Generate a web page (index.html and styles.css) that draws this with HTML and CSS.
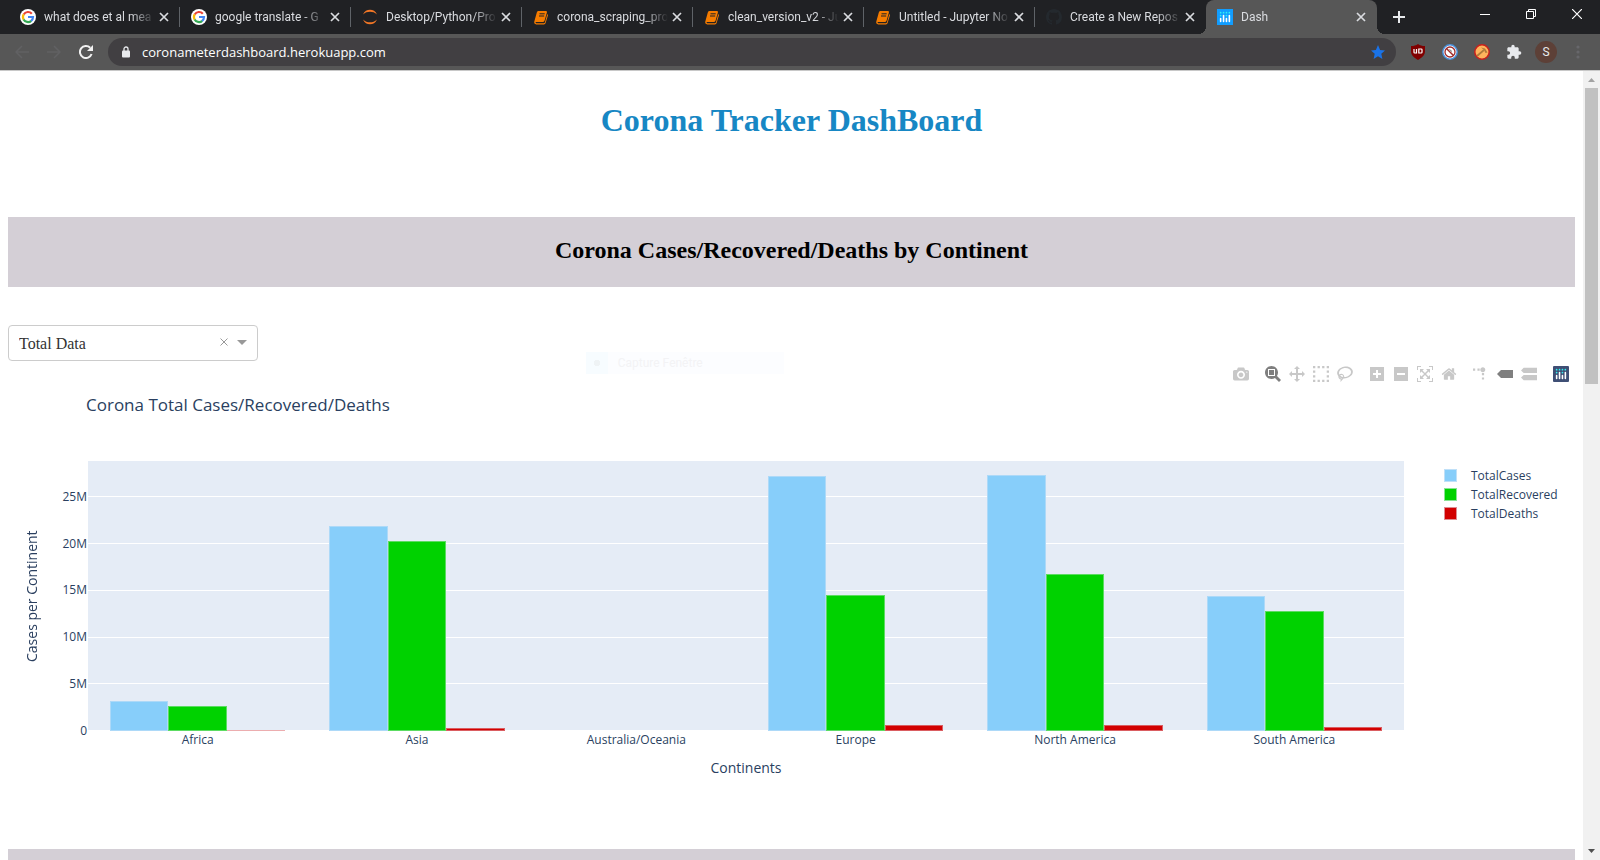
FILE: index.html
```html
<!DOCTYPE html>
<html lang="en">
<head>
<meta charset="utf-8">
<title>Dash</title>
<link rel="stylesheet" href="styles.css">
</head>
<body>
<svg class="sprite" aria-hidden="true">
  <symbol id="google" viewBox="0 0 16 16">
    <circle cx="8" cy="8" r="8" fill="#fff"/>
    <g fill="none" stroke-width="2.2">
      <path d="M11.8 4.7A5 5 0 0 0 3.7 5.5" stroke="#ea4335"/>
      <path d="M3.7 5.4A5 5 0 0 0 3.7 10.6" stroke="#fbbc05"/>
      <path d="M3.6 10.4A5 5 0 0 0 11.3 11.8" stroke="#34a853"/>
      <path d="M11.1 11.9A5 5 0 0 0 13 8H8" stroke="#4285f4"/>
    </g>
  </symbol>
  <symbol id="jupyter" viewBox="0 0 16 16">
    <path d="M1 5.5C2.5 2 5 .8 8 .8s5.500 1.200 7 4.700C13 3.300 10.500 2.700 8 2.700S3 3.300 1 5.500zM1 10.500c1.500 3.500 4 4.700 7 4.700s5.500-1.200 7-4.700c-2 2.200-4.500 2.800-7 2.800s-5-.6-7-2.800z" fill="#f37726"/>
  </symbol>
  <symbol id="book" viewBox="0 0 16 16">
    <path d="M5.500 2h7.200c1 0 1.500.7 1.200 1.600l-2.300 8c-.2.800-.8 1.400-1.700 1.400H3.200c-.9 0-.9 1.200.1 1.200h7.500c.5 0 .9-.3 1.100-.8L14.300 5c.6.300.8.900.6 1.500l-2.300 7.600c-.2.800-.9 1.300-1.700 1.300H3.300C1.700 15.400.8 14 1.300 12.600L3.800 3.500C4 2.600 4.600 2 5.500 2z" fill="#f57c00"/>
    <path d="M5 3h8l-2.500 9.500h-8z" fill="#f57c00"/>
    <path d="M6.500 4.800h5.200M6 7h5.200" stroke="#202124" fill="none"/>
  </symbol>
  <symbol id="github" viewBox="0 0 16 16">
    <path d="M8 0C3.580 0 0 3.580 0 8c0 3.540 2.290 6.530 5.470 7.590.4.070.55-.17.55-.38 0-.19-.01-.82-.01-1.490-2.010.37-2.530-.49-2.690-.94-.09-.23-.48-.94-.82-1.130-.28-.15-.68-.52-.01-.53.63-.01 1.080.58 1.230.82.72 1.210 1.870.87 2.330.66.07-.52.28-.87.51-1.070-1.780-.2-3.640-.89-3.640-3.950 0-.87.31-1.590.82-2.150-.08-.2-.36-1.020.08-2.120 0 0 .67-.21 2.200.82.64-.18 1.320-.27 2-.27s1.360.09 2 .27c1.530-1.040 2.200-.82 2.200-.82.44 1.100.16 1.920.08 2.120.51.56.82 1.270.82 2.150 0 3.070-1.870 3.750-3.650 3.950.29.25.54.73.54 1.480 0 1.070-.01 1.930-.01 2.200 0 .21.15.46.55.38A8.010 8.010 0 0 0 16 8c0-4.420-3.580-8-8-8z" fill="#24292e"/>
  </symbol>
  <symbol id="plotly-dots" viewBox="0 0 132 132">
    <g class="dots"><circle cx="78" cy="54" r="7"/><circle cx="30" cy="54" r="7"/><circle cx="30" cy="30" r="7"/><circle cx="54" cy="30" r="7"/><circle cx="78" cy="30" r="7"/><circle cx="102" cy="30" r="7"/></g>
    <path d="M30 78v25M54 54v49M78 78v25M102 54v49" stroke="#fff" stroke-width="13" stroke-linecap="round"/>
  </symbol>
  <symbol id="x" viewBox="0 0 10 10"><path d="M1 1l8 8M9 1L1 9" fill="none" stroke="currentColor" stroke-width="1.700"/></symbol>
</svg>

<header class="browser">
  <div class="tabstrip">
    <div class="tab"><svg class="favicon"><use href="#google"/></svg><span class="tab-title">what does et al mea</span><button class="tab-close" aria-label="Close tab"><svg><use href="#x"/></svg></button></div>
    <div class="tab"><svg class="favicon"><use href="#google"/></svg><span class="tab-title">google translate - G</span><button class="tab-close" aria-label="Close tab"><svg><use href="#x"/></svg></button></div>
    <div class="tab"><svg class="favicon"><use href="#jupyter"/></svg><span class="tab-title">Desktop/Python/Pro</span><button class="tab-close" aria-label="Close tab"><svg><use href="#x"/></svg></button></div>
    <div class="tab"><svg class="favicon"><use href="#book"/></svg><span class="tab-title">corona_scraping_pro</span><button class="tab-close" aria-label="Close tab"><svg><use href="#x"/></svg></button></div>
    <div class="tab"><svg class="favicon"><use href="#book"/></svg><span class="tab-title">clean_version_v2 - Ju</span><button class="tab-close" aria-label="Close tab"><svg><use href="#x"/></svg></button></div>
    <div class="tab"><svg class="favicon"><use href="#book"/></svg><span class="tab-title">Untitled - Jupyter No</span><button class="tab-close" aria-label="Close tab"><svg><use href="#x"/></svg></button></div>
    <div class="tab tab-last"><svg class="favicon"><use href="#github"/></svg><span class="tab-title">Create a New Repos</span><button class="tab-close" aria-label="Close tab"><svg><use href="#x"/></svg></button></div>
    <div class="tab tab-active"><svg class="favicon favicon-dash"><use href="#plotly-dots"/></svg><span class="tab-title">Dash</span><button class="tab-close" aria-label="Close tab"><svg><use href="#x"/></svg></button></div>
    <button class="new-tab" aria-label="New tab"><svg width="12" height="12" viewBox="0 0 12 12"><path d="M6 0v12M0 6h12" stroke="#e8eaed" stroke-width="2"/></svg></button>
    <div class="window-controls">
      <button aria-label="Minimize"><svg width="10" height="10" viewBox="0 0 10 10"><path d="M0 5.500h10" stroke="#fff"/></svg></button>
      <button aria-label="Restore"><svg width="10" height="10" viewBox="0 0 10 10"><path d="M.5 2.500h7v7h-7zM2.500 2.500v-2h7v7h-2" fill="none" stroke="#fff"/></svg></button>
      <button aria-label="Close"><svg width="10" height="10" viewBox="0 0 10 10"><path d="M0 0l10 10M10 0L0 10" stroke="#fff" stroke-width="1.200"/></svg></button>
    </div>
  </div>
  <div class="toolbar">
    <button class="nav" aria-label="Back"><svg width="14" height="14" viewBox="0 0 14 14"><path d="M14 7H1M7 1L1 7l6 6" fill="none" stroke="#616163" stroke-width="1.500"/></svg></button>
    <button class="nav" aria-label="Forward"><svg width="14" height="14" viewBox="0 0 14 14"><path d="M0 7h13M7 1l6 6-6 6" fill="none" stroke="#616163" stroke-width="1.500"/></svg></button>
    <button class="nav" aria-label="Reload"><svg width="14" height="14" viewBox="0 0 14 14"><path d="M12.600 9A6 6 0 1 1 11.200 2.800" fill="none" stroke="#f1f1f1" stroke-width="2"/><path d="M14 0v6H8z" fill="#f1f1f1"/></svg></button>
    <div class="address">
      <svg class="lock" width="8" height="12" viewBox="0 0 8 12"><path d="M2 5V3a2 2 0 0 1 4 0v2" fill="none" stroke="#e8eaed" stroke-width="1.300"/><rect y="4.500" width="8" height="7" rx="1" fill="#e8eaed"/></svg>
      <input class="url" type="text" aria-label="Address" value="coronameterdashboard.herokuapp.com">
      <button class="star" aria-label="Bookmark"><svg width="14" height="14" viewBox="0 0 14 14"><path d="M7 0l2.100 4.900 4.900.5-3.700 3.400L11.400 14 7 11.200 2.600 14l1.100-5.200L0 5.400l4.900-.5z" fill="#1a73e8"/></svg></button>
    </div>
    <div class="extensions">
      <button aria-label="uBlock"><svg width="16" height="16" viewBox="0 0 16 16"><path d="M8 0c2 1.400 4 2 7 2v5c0 4-2.500 6.500-7 9-4.500-2.500-7-5-7-9V2c3 0 5-.6 7-2z" fill="#800000"/><path d="M4 5v3.300q0 .7.700.7h1.800V5M8.800 5v4h2.400q.8 0 .8-.8V5.800q0-.8-.8-.8z" fill="none" stroke="#fff" stroke-width="1.200"/></svg></button>
      <button aria-label="Blocker"><svg width="16" height="16" viewBox="0 0 16 16"><circle cx="8" cy="8" r="7.200" fill="#fff" stroke="#4a90d9" stroke-width="1.500"/><circle cx="8" cy="8" r="5" fill="#fff" stroke="#a02c2c" stroke-width="1.300"/><path d="M4.500 4.500l7 7" stroke="#a02c2c" stroke-width="1.500"/><path d="M7.500 5.500l2.500 2" stroke="#777"/></svg></button>
      <button aria-label="Hammer"><svg width="16" height="16" viewBox="0 0 16 16"><circle cx="8" cy="8" r="7.200" fill="#ffb35c" stroke="#c8201c" stroke-width="1.500"/><path d="M3 12l7-6" stroke="#b07a3a" stroke-width="1.700"/><path d="M7 3.500l4 1 2.500 4-2 .5-1.500-3z" fill="#b07a3a"/></svg></button>
      <button aria-label="Extensions"><svg width="16" height="16" viewBox="0 0 24 24"><path d="M20.500 11H19V7c0-1.100-.9-2-2-2h-4V3.500a2.500 2.500 0 0 0-5 0V5H4c-1.100 0-2 .9-2 2v3.800h1.500a2.700 2.700 0 0 1 0 5.400H2V20c0 1.100.9 2 2 2h3.800v-1.500a2.700 2.700 0 0 1 5.400 0V22H17c1.100 0 2-.9 2-2v-4h1.500a2.500 2.500 0 0 0 0-5z" fill="#e8eaed"/></svg></button>
      <button class="avatar" aria-label="Profile">S</button>
      <button aria-label="Menu"><svg width="4" height="14" viewBox="0 0 4 14"><g fill="#67676b"><circle cx="2" cy="2" r="1.600"/><circle cx="2" cy="7" r="1.600"/><circle cx="2" cy="12" r="1.600"/></g></svg></button>
    </div>
  </div>
</header>

<div class="viewport">
  <main class="page">
    <h1 class="page-title">Corona Tracker DashBoard</h1>
    <h2 class="band">Corona Cases/Recovered/Deaths by Continent</h2>

    <div class="dropdown">
      <select class="dropdown-select" aria-label="Data"><option>Total Data</option></select>
      <button class="dropdown-clear" aria-label="Clear"><svg width="8" height="8" viewBox="0 0 8 8"><path d="M.5.5l7 7M7.500.5l-7 7" stroke="#999"/></svg></button>
      <svg class="dropdown-arrow" width="10" height="5" viewBox="0 0 10 5"><path d="M0 0h10L5 5z" fill="#999"/></svg>
    </div>

    <div class="snip"><span class="snip-dot"></span><span class="snip-label">Capture Fenêtre</span></div>

    <section class="graph">
      <div class="modebar">
        <div class="mode-group">
          <button aria-label="Download plot"><svg viewBox="0 0 1000 1000"><path transform="matrix(1 0 0 -1 0 850)" d="m500 450c-83 0-150-67-150-150 0-83 67-150 150-150 83 0 150 67 150 150 0 83-67 150-150 150z m400 150h-120c-16 0-34 13-39 29l-31 93c-6 15-23 28-40 28h-340c-16 0-34-13-39-28l-31-94c-6-15-23-28-40-28h-120c-55 0-100-45-100-100v-450c0-55 45-100 100-100h800c55 0 100 45 100 100v450c0 55-45 100-100 100z m-400-550c-138 0-250 112-250 250 0 138 112 250 250 250 138 0 250-112 250-250 0-138-112-250-250-250z m365 380c-19 0-35 16-35 35 0 19 16 35 35 35 19 0 35-16 35-35 0-19-16-35-35-35z"/></svg></button>
        </div>
        <div class="mode-group">
          <button class="active" aria-label="Zoom"><svg viewBox="0 0 1000 1000"><path transform="matrix(1 0 0 -1 0 850)" d="m1000-25l-250 251c40 63 63 138 63 218 0 224-182 406-407 406-224 0-406-182-406-406s183-406 407-406c80 0 155 22 218 62l250-250 125 125z m-812 250l0 438 437 0 0-438-437 0z m62 375l313 0 0-312-313 0 0 312z"/></svg></button>
          <button aria-label="Pan"><svg viewBox="0 0 1000 1000"><path transform="matrix(1 0 0 -1 0 850)" d="m1000 350l-187 188 0-125-250 0 0 250 125 0-188 187-187-187 125 0 0-250-250 0 0 125-188-188 186-187 0 125 252 0 0-250-125 0 187-188 188 188-125 0 0 250 250 0 0-126 187 188z"/></svg></button>
          <button aria-label="Box select"><svg viewBox="0 0 1000 1000"><path transform="matrix(1 0 0 -1 0 850)" d="m0 850l0-143 143 0 0 143-143 0z m286 0l0-143 143 0 0 143-143 0z m285 0l0-143 143 0 0 143-143 0z m286 0l0-143 143 0 0 143-143 0z m-857-286l0-143 143 0 0 143-143 0z m857 0l0-143 143 0 0 143-143 0z m-857-285l0-143 143 0 0 143-143 0z m857 0l0-143 143 0 0 143-143 0z m-857-286l0-143 143 0 0 143-143 0z m286 0l0-143 143 0 0 143-143 0z m285 0l0-143 143 0 0 143-143 0z m286 0l0-143 143 0 0 143-143 0z"/></svg></button>
          <button aria-label="Lasso select"><svg viewBox="0 0 1031 1000"><path transform="matrix(1 0 0 -1 0 850)" d="m1018 538c-36 207-290 336-568 286-277-48-473-256-436-463 10-57 36-108 76-151-13-66 11-137 68-183 34-28 75-41 114-42l-55-70 0 0c-2-1-3-2-4-3-10-14-8-34 5-45 14-11 34-8 45 4 1 1 2 3 2 5l0 0 113 140c16 11 31 24 45 40 4 3 6 7 8 11 48-3 100 0 151 9 278 48 473 255 436 462z m-624-379c-80 14-149 48-197 96 42 42 109 47 156 9 33-26 47-66 41-105z m-187-74c-19 16-33 37-39 60 50-32 109-55 174-68-42-25-95-24-135 8z m360 75c-34-7-69-9-102-8 8 62-16 128-68 170-73 59-175 54-244-5-9 20-16 40-20 61-28 159 121 317 333 354s407-60 434-217c28-159-121-318-333-355z"/></svg></button>
        </div>
        <div class="mode-group">
          <button aria-label="Zoom in"><svg viewBox="0 0 875 1000"><path transform="matrix(1 0 0 -1 0 850)" d="m1 787l0-875 875 0 0 875-875 0z m687-500l-187 0 0-187-125 0 0 187-188 0 0 125 188 0 0 187 125 0 0-187 187 0 0-125z"/></svg></button>
          <button aria-label="Zoom out"><svg viewBox="0 0 875 1000"><path transform="matrix(1 0 0 -1 0 850)" d="m0 788l0-876 875 0 0 876-875 0z m688-500l-500 0 0 125 500 0 0-125z"/></svg></button>
          <button aria-label="Autoscale"><svg viewBox="0 0 1000 1000"><path transform="matrix(1 0 0 -1 0 850)" d="m250 850l-187 0-63 0 0-62 0-188 63 0 0 188 187 0 0 62z m688 0l-188 0 0-62 188 0 0-188 62 0 0 188 0 62-62 0z m-875-938l0 188-63 0 0-188 0-62 63 0 187 0 0 62-187 0z m875 188l0-188-188 0 0-62 188 0 62 0 0 62 0 188-62 0z m-125 188l-1 0-93-94-156 156 156 156 92-93 2 0 0 250-250 0 0-2 93-92-156-156-156 156 94 92 0 2-250 0 0-250 0 0 93 93 157-156-157-156-93 94 0 0 0-250 250 0 0 0-94 93 156 157 156-157-93-93 0 0 250 0 0 250z"/></svg></button>
          <button aria-label="Reset axes"><svg viewBox="0 0 928 1000"><path transform="matrix(1 0 0 -1 0 850)" d="m786 296v-267q0-15-11-26t-25-10h-214v214h-143v-214h-214q-15 0-25 10t-11 26v267q0 1 0 2t0 2l321 264 321-264q1-1 1-4z m124 39l-34-41q-5-5-12-6h-2q-7 0-12 3l-386 322-386-322q-7-4-13-4-7 2-12 7l-35 41q-4 5-3 13t6 12l401 334q18 15 42 15t43-15l136-114v109q0 8 5 13t13 5h107q8 0 13-5t5-13v-227l122-102q5-5 6-12t-4-13z"/></svg></button>
        </div>
        <div class="mode-group">
          <button aria-label="Spike lines"><svg viewBox="0 0 1000 1000"><path transform="matrix(1.5 0 0 -1.5 0 850)" d="M512 409c0-57-46-104-103-104-57 0-104 47-104 104 0 57 47 103 104 103 57 0 103-46 103-103z m-327-39l92 0 0 92-92 0z m-185 0l92 0 0 92-92 0z m370-186l92 0 0 93-92 0z m0-184l92 0 0 92-92 0z"/></svg></button>
          <button class="active" aria-label="Show closest data"><svg viewBox="0 0 1500 1000"><path transform="matrix(1 0 0 -1 0 850)" d="m375 725l0 0-375-375 375-374 0-1 1125 0 0 750-1125 0z"/></svg></button>
          <button aria-label="Compare data"><svg viewBox="0 0 1125 1000"><path transform="matrix(1 0 0 -1 0 850)" d="m187 786l0 2-187-188 188-187 0 0 937 0 0 373-938 0z m0-499l0 1-187-188 188-188 0 0 937 0 0 376-938-1z"/></svg></button>
        </div>
        <div class="mode-group">
          <button class="plotly" aria-label="Plotly"><svg><use href="#plotly-dots"/></svg></button>
        </div>
      </div>

      <h3 class="graph-title">Corona Total Cases/Recovered/Deaths</h3>

      <div class="chart">
        <div class="y-title">Cases per Continent</div>
        <div class="y-axis"><span></span><span>25M</span><span>20M</span><span>15M</span><span>10M</span><span>5M</span><span>0</span></div>
        <div class="plot">
          <div class="grid"><i></i><i></i><i></i><i></i><i></i><i></i></div>
          <div class="category"><b class="bar cases" style="height:11.3%"></b><b class="bar recovered" style="height:9.3%"></b><b class="bar deaths thin" style="height:.37%"></b></div>
          <div class="category"><b class="bar cases" style="height:75.8%"></b><b class="bar recovered" style="height:70.4%"></b><b class="bar deaths" style="height:1.3%"></b></div>
          <div class="category"><b class="bar cases" style="height:0%"></b><b class="bar recovered" style="height:0%"></b><b class="bar deaths" style="height:0%"></b></div>
          <div class="category"><b class="bar cases" style="height:94.3%"></b><b class="bar recovered" style="height:50.4%"></b><b class="bar deaths" style="height:2.2%"></b></div>
          <div class="category"><b class="bar cases" style="height:95%"></b><b class="bar recovered" style="height:58.3%"></b><b class="bar deaths" style="height:2.1%"></b></div>
          <div class="category"><b class="bar cases" style="height:50%"></b><b class="bar recovered" style="height:44.3%"></b><b class="bar deaths" style="height:1.4%"></b></div>
        </div>
        <ul class="legend">
          <li><i class="swatch cases"></i>TotalCases</li>
          <li><i class="swatch recovered"></i>TotalRecovered</li>
          <li><i class="swatch deaths"></i>TotalDeaths</li>
        </ul>
        <div class="x-axis"><span>Africa</span><span>Asia</span><span>Australia/Oceania</span><span>Europe</span><span>North America</span><span>South America</span></div>
        <div class="x-title">Continents</div>
      </div>
    </section>

    <div class="band band-next"></div>
  </main>
  <div class="scrollbar">
    <svg width="7" height="4" viewBox="0 0 7 4"><path d="M0 4L3.500 0 7 4z" fill="#a3a3a3"/></svg>
    <div class="track"><div class="thumb"></div></div>
    <svg width="7" height="4" viewBox="0 0 7 4"><path d="M0 0h7L3.500 4z" fill="#505050"/></svg>
  </div>
</div>
</body>
</html>
```

FILE: styles.css
```css
* { box-sizing: border-box; }

body {
  margin: 0;
  height: 100vh;
  display: flex;
  flex-direction: column;
  overflow: hidden;
  background: #fff;
  font-family: "Liberation Serif", "Times New Roman", serif;
}

button {
  display: flex;
  align-items: center;
  justify-content: center;
  padding: 0;
  border: 0;
  background: none;
  color: inherit;
  font: inherit;
}

.sprite { position: absolute; width: 0; height: 0; }

/* Browser window */
.browser {
  flex: none;
  font-family: "Open Sans", "Noto Sans", sans-serif;
  color: #e8eaed;
}

.tabstrip {
  display: flex;
  height: 34px;
  padding-left: 9px;
  background: #202124;
}

.tab {
  flex: 0 1 171px;
  min-width: 0;
  display: flex;
  align-items: center;
  padding-left: 11px;
  font-family: Roboto, "Open Sans", sans-serif;
  font-size: 12px;
  color: #dadce0;
}

.tab::after {
  content: "";
  flex: none;
  width: 1px;
  height: 20px;
  margin-left: 10px;
  background: #5f6368;
}

.tab-last::after,
.tab-active::after { background: transparent; }

.favicon { flex: none; width: 16px; height: 16px; margin-right: 8px; }
.favicon-dash { background: #119dff; }
.dots { fill: #32f0f0; }

.tab-title {
  flex: 1;
  min-width: 0;
  overflow: hidden;
  white-space: nowrap;
  -webkit-mask-image: linear-gradient(to left, transparent, #000 24px);
  mask-image: linear-gradient(to left, transparent, #000 24px);
}

.tab-close { width: 10px; height: 10px; margin-left: 4px; }
.tab-close svg { width: 10px; height: 10px; }

.tab-active {
  position: relative;
  background: #575757;
  border-radius: 8px 8px 0 0;
}

.tab-active::before {
  content: "";
  position: absolute;
  bottom: 0;
  left: -8px;
  right: -8px;
  height: 8px;
  background:
    radial-gradient(circle at 0 0, transparent 8px, #575757 8px) left / 8px 8px no-repeat,
    radial-gradient(circle at 100% 0, transparent 8px, #575757 8px) right / 8px 8px no-repeat;
}

.new-tab { width: 44px; }

.window-controls { display: flex; height: 28px; margin-left: auto; }
.window-controls button { width: 46px; }

.toolbar {
  display: flex;
  align-items: center;
  height: 37px;
  padding: 0 6px;
  background: #575757;
  border-bottom: 1px solid #c8c8c8;
}

.nav { width: 32px; height: 28px; }

.address {
  flex: 1;
  display: flex;
  align-items: center;
  height: 28px;
  margin-left: 6px;
  padding: 0 11px 0 14px;
  border-radius: 14px;
  background: #413f42;
}

.url {
  flex: 1;
  margin-left: 12px;
  padding: 0;
  border: 0;
  background: none;
  color: #fff;
  font: 13px "Open Sans", "Noto Sans", sans-serif;
}

.extensions { display: flex; margin-left: 6px; }
.extensions button { width: 32px; height: 22px; }
.extensions .avatar {
  width: 22px;
  margin: 0 5px;
  border-radius: 50%;
  background: #5d4037;
  font: 12px Roboto, sans-serif;
}

/* Page area */
.viewport { flex: 1; min-height: 0; display: flex; }

.page {
  position: relative;
  flex: 1;
  min-width: 0;
  padding: 30px 8px 0;
  overflow: hidden;
}

.page-title {
  margin: 0;
  text-align: center;
  font-size: 32px;
  line-height: 38px;
  color: #1787c4;
}

.band {
  height: 70px;
  margin: 78px 0 38px;
  padding-top: 20px;
  background: #d4cfd6;
  color: #000;
  text-align: center;
  font-size: 24px;
  line-height: 27px;
}

.band-next { margin: 38px 0 0; }

.dropdown { position: relative; width: 250px; }

.dropdown-select {
  display: block;
  width: 100%;
  height: 36px;
  padding: 0 10px;
  border: 1px solid #ccc;
  border-radius: 4px;
  appearance: none;
  background: #fff;
  color: #333;
  font: 16px "Liberation Serif", "Times New Roman", serif;
}

.dropdown-clear { position: absolute; top: 13px; right: 30px; }
.dropdown-arrow { position: absolute; top: 15px; right: 11px; }

/* Fading overlay left by the capture tool */
.snip {
  position: absolute;
  top: 281px;
  left: 37%;
  display: flex;
  width: 198px;
  height: 22px;
  background: #fcfdff;
  color: #f3f3f5;
  font: 12px/22px Roboto, "Open Sans", sans-serif;
}

.snip-dot { width: 22px; margin-right: 10px; background: radial-gradient(circle, #eff3f5 3px, #f7fcff 3px); }

/* Graph */
.graph {
  position: relative;
  height: 450px;
  font-family: "Open Sans", "Noto Sans", sans-serif;
  color: #2a3f5f;
}

.modebar {
  position: absolute;
  top: 2px;
  right: 2px;
  display: flex;
  gap: 8px;
}

.mode-group { display: flex; }
.mode-group button { width: 24px; height: 22px; }
.mode-group svg { width: 16px; height: 16px; fill: #c8c8c8; }
.mode-group .active svg { fill: #7f7f7f; }
.mode-group .plotly svg { background: #3f4f75; border-radius: 1px; }
.plotly .dots { fill: #80cfbe; }

.graph-title {
  margin: 0;
  padding: 32px 0 0 78px;
  font-size: 17px;
  font-weight: 400;
  line-height: 24px;
}

.chart {
  display: grid;
  grid-template-columns: 48px 32px minmax(0, 1fr) 171px;
  grid-template-rows: 270px 22px 32px;
  margin-top: 44px;
  font-size: 12px;
}

.y-title {
  display: flex;
  align-items: center;
  justify-content: center;
  writing-mode: vertical-rl;
  transform: rotate(180deg);
  font-size: 14px;
  line-height: 20px;
}

.y-axis,
.grid {
  display: grid;
  grid-template-rows: 38fr 50fr 50fr 50fr 50fr 50fr;
}

.y-axis { text-align: right; line-height: 16px; grid-auto-rows: 0; padding-right: 1px; }
.y-axis span { margin-top: -8px; }

.plot {
  position: relative;
  display: flex;
  background: #e5ecf6;
  border-bottom: 1px solid #fff;
}

.grid { position: absolute; inset: 0; }
.grid i + i { border-top: 1px solid #fff; }

.category {
  position: relative;
  flex: 1;
  display: flex;
  align-items: flex-end;
  justify-content: center;
  margin-bottom: -1px;
}

.bar { width: 26.667%; box-shadow: inset 0 0 0 1px rgba(229, 236, 246, .4); }
.thin { opacity: .5; }
.cases { background: #87cefa; }
.recovered { background: #00d200; }
.deaths { background: #d20000; }

.legend {
  margin: 0;
  padding: 5px 0 0 40px;
  list-style: none;
}

.legend li { display: flex; align-items: center; height: 19px; }
.swatch {
  width: 13px;
  height: 13px;
  margin-right: 14px;
  box-shadow: inset 0 0 0 1px rgba(229, 236, 246, .6);
}

.x-axis { grid-column: 3; display: flex; line-height: 18px; }
.x-axis span { flex: 1; text-align: center; }
.x-title { grid-column: 3; text-align: center; font-size: 14px; line-height: 30px; }

/* Page scrollbar */
.scrollbar {
  display: flex;
  flex-direction: column;
  align-items: center;
  width: 17px;
  padding: 7px 0;
  background: #f1f1f1;
}

.track { flex: 1; width: 13px; padding: 6px 0; }
.thumb { height: 39.2%; min-height: 20px; background: #c1c1c1; }
```
